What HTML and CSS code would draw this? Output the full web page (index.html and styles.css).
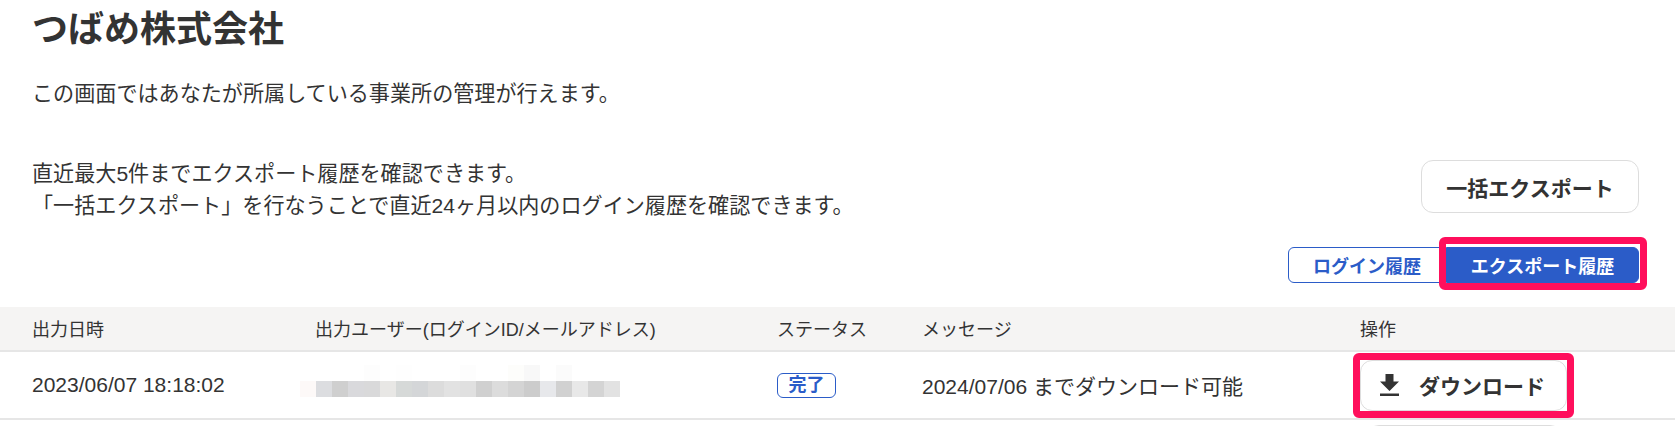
FILE: index.html
```html
<!DOCTYPE html>
<html lang="ja">
<head>
<meta charset="utf-8">
<title>つばめ株式会社</title>
<link rel="stylesheet" href="styles.css">
</head>
<body>
<main class="page">
  <h1 class="title">つばめ株式会社</h1>
  <p class="lead">この画面ではあなたが所属している事業所の管理が行えます。</p>
  <section class="intro">
    <p class="intro-text">直近最大5件までエクスポート履歴を確認できます。<br>「一括エクスポート」を行なうことで直近24ヶ月以内のログイン履歴を確認できます。</p>
    <button class="btn bulk">一括エクスポート</button>
  </section>
  <div class="tabs">
    <button class="tab">ログイン履歴</button>
    <button class="tab active">エクスポート履歴</button>
  </div>
  <div class="table">
    <div class="row head">
      <div>出力日時</div>
      <div>出力ユーザー(ログインID/メールアドレス)</div>
      <div>ステータス</div>
      <div>メッセージ</div>
      <div>操作</div>
    </div>
    <div class="row body">
      <div>2023/06/07 18:18:02</div>
      <div>
        <svg class="mosaic" viewBox="0 0 320 32" aria-hidden="true">
          <g class="faint">
            <rect x="64" width="16" height="16" fill="#fdfdfd"/>
            <rect x="96" width="16" height="16" fill="#fefefe"/>
            <rect x="160" width="16" height="16" fill="#fdfdfd"/>
            <rect x="208" width="16" height="16" fill="#fdfdfb"/>
            <rect x="224" width="16" height="16" fill="#f8f8f8"/>
            <rect x="256" width="16" height="16" fill="#fbfbfb"/>
          </g>
          <g>
            <rect x="0" y="16" width="16" height="16" fill="#fdf9f8"/>
            <rect x="16" y="16" width="16" height="16" fill="#dcdde0"/>
            <rect x="32" y="16" width="16" height="16" fill="#cfcfcf"/>
            <rect x="48" y="16" width="16" height="16" fill="#d9d9dc"/>
            <rect x="64" y="16" width="16" height="16" fill="#d9d9da"/>
            <rect x="80" y="16" width="16" height="16" fill="#e8e7e5"/>
            <rect x="96" y="16" width="16" height="16" fill="#d6d9d8"/>
            <rect x="112" y="16" width="16" height="16" fill="#d4d6d8"/>
            <rect x="128" y="16" width="16" height="16" fill="#dcdcdc"/>
            <rect x="144" y="16" width="16" height="16" fill="#e2e2e2"/>
            <rect x="160" y="16" width="16" height="16" fill="#e0e0e0"/>
            <rect x="176" y="16" width="16" height="16" fill="#d0d0d0"/>
            <rect x="192" y="16" width="16" height="16" fill="#dcdcdc"/>
            <rect x="208" y="16" width="16" height="16" fill="#d4d4d4"/>
            <rect x="224" y="16" width="16" height="16" fill="#cccccc"/>
            <rect x="240" y="16" width="16" height="16" fill="#e7e8eb"/>
            <rect x="256" y="16" width="16" height="16" fill="#d1d1d1"/>
            <rect x="272" y="16" width="16" height="16" fill="#e8e8e8"/>
            <rect x="288" y="16" width="16" height="16" fill="#d4d4d4"/>
            <rect x="304" y="16" width="16" height="16" fill="#e2e2e2"/>
          </g>
        </svg>
      </div>
      <div><span class="badge">完了</span></div>
      <div>2024/07/06 までダウンロード可能</div>
      <div>
        <button class="btn download">
          <svg class="dl-icon" viewBox="0 0 19 22" aria-hidden="true"><path d="M5.5 0h8v7.5H19L9.5 17 0 7.5h5.5z"/><path d="M0 19.5h19V22H0z"/></svg>
          ダウンロード
        </button>
      </div>
    </div>
    <div class="row next">
      <div></div><div></div><div></div><div></div>
      <div><div class="btn peek"></div></div>
    </div>
  </div>
</main>
</body>
</html>
```
FILE: styles.css
```css
* { box-sizing: border-box; }
html, body { margin: 0; height: 426px; overflow: hidden; background: #fff; }
body { font-family: "Liberation Sans", "Noto Sans CJK JP", sans-serif; color: #333; }
.page { height: 426px; overflow: hidden; padding-top: 7px; }
.title { margin: 0 0 0 32px; font-size: 36px; line-height: 46px; font-weight: 700; }
.lead { margin: 21px 0 0 32px; font-size: 21.1px; line-height: 40px; }
.intro { display: flex; justify-content: space-between; align-items: flex-start; margin: 46px 36px 0 32px; }
.intro-text { margin: -2px 0 0; font-size: 21.1px; line-height: 32px; }
.btn { background: #fff; border: 1px solid #ddd; border-radius: 12px; font: inherit; font-weight: 700; color: #333; }
.bulk { width: 218px; height: 53px; font-size: 21px; padding: 0; }
.tabs { display: flex; justify-content: flex-end; margin: 25px 36px 0 0; }
.tab { height: 36px; font: inherit; font-size: 18px; font-weight: 700; padding: 0; background: #fff; color: #2b5cc8; border: 1px solid #2b5cc8; border-radius: 6px 0 0 6px; width: 158px; }
.tab.active { width: 193px; background: #2b5cc8; color: #fff; border-radius: 0 6px 6px 0; position: relative; }
.tab.active::after { content: ""; position: absolute; inset: -11px -9px -8px -8px; border: 7px solid #ff0f5c; border-radius: 6px; }
.table { margin-top: 24px; }
.row { display: grid; grid-template-columns: 283px 462px 145px 438px 1fr; padding-left: 32px; align-items: center; }
.head { height: 45px; padding-bottom: 2px; background: #f5f4f3; border-bottom: 2px solid #e6e6e6; font-size: 18px; }
.body { height: 68px; border-bottom: 2px solid #e6e6e6; font-size: 21px; }
.next { height: 6px; overflow: hidden; align-items: start; }
.mosaic { display: block; width: 320px; height: 32px; margin-left: -15px; margin-top: -8px; }
.badge { display: inline-flex; align-items: center; justify-content: center; width: 59px; height: 25px; border: 1px solid #2b5cc8; border-radius: 6px; color: #2b5cc8; font-size: 18px; font-weight: 700; line-height: 1; vertical-align: middle; }
.download { display: flex; align-items: center; width: 207px; height: 51px; padding: 0 0 0 19px; gap: 20px; font-size: 21px; position: relative; }
.download::after { content: ""; position: absolute; inset: -8px; border: 7px solid #ff0f5c; border-radius: 6px; }
.dl-icon { width: 19px; height: 22px; fill: #333; }
.peek { width: 195px; height: 30px; margin-left: 7px; margin-top: 5px; }
```
